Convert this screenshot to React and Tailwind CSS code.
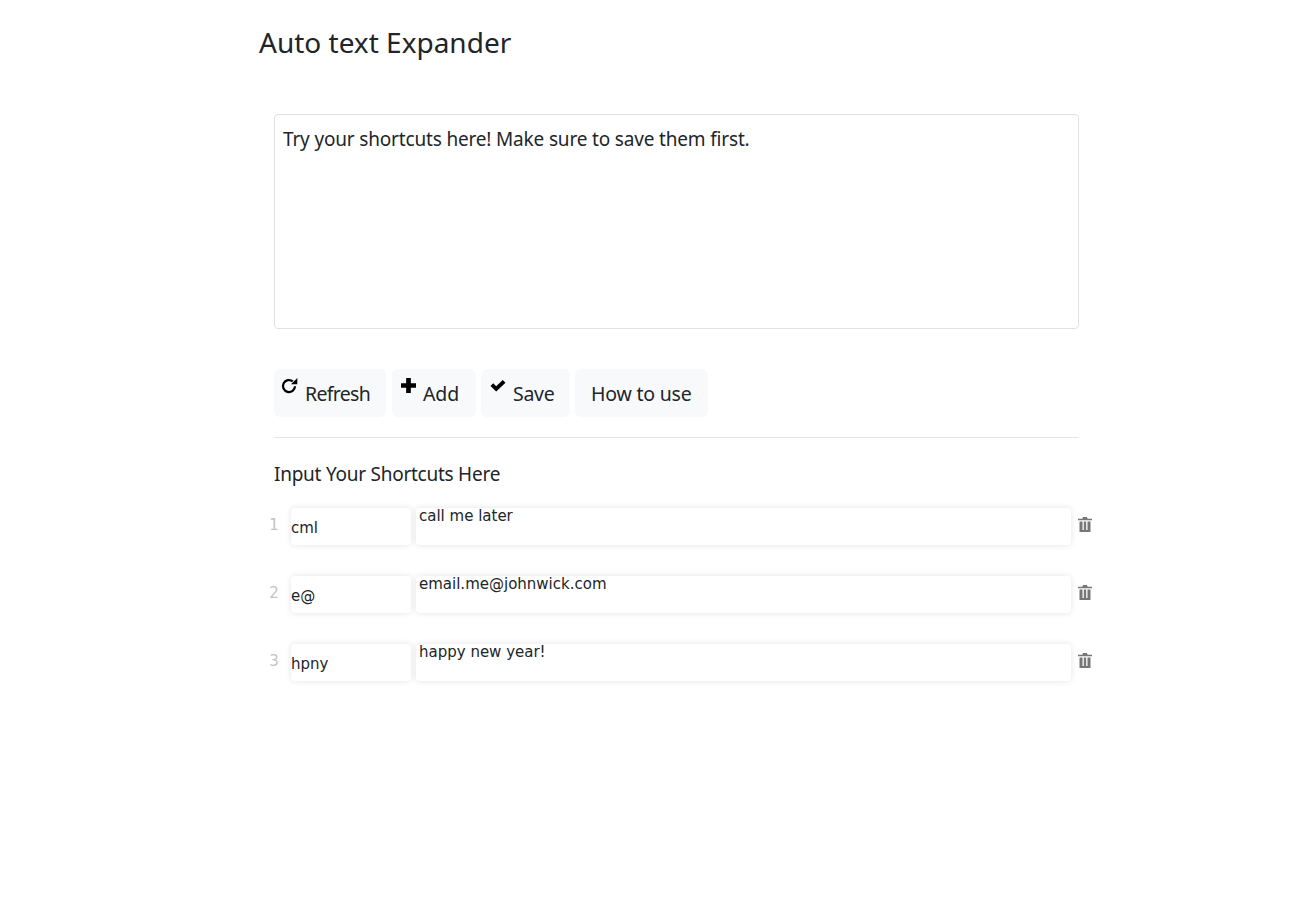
import React from "react";

const Refresh = () => (
  <svg width="17" height="17" viewBox="0 0 17 17" className="absolute left-[7px] top-[8px]">
    <path d="M14 9.2A6 6 0 1 1 11.800 4.400" fill="none" stroke="#000" strokeWidth="2.200" />
    <path d="M10 7.300h6.300V1z" fill="#000" />
  </svg>
);
const Plus = () => (
  <svg width="15" height="15" viewBox="0 0 16 16" className="absolute left-[9px] top-[9px]">
    <path d="M5.500 0h5v5.500H16v5h-5.500V16h-5v-5.500H0v-5h5.500z" fill="#000" />
  </svg>
);
const Check = () => (
  <svg width="16" height="16" viewBox="0 0 16 16" className="absolute left-[9px] top-[9px]">
    <path d="M.5 8l2.700-2.700L6.200 8.200 12.700 2 15.500 4.700 6.200 13.600z" fill="#000" />
  </svg>
);
const Trash = () => (
  <svg width="14" height="15" viewBox="0 0 14 15" className="shrink-0">
    <path d="M5 0h4l.6 1.700H14V3.300H0V1.700H4.400zM1.500 4.500h11V15h-11zM4.500 4.500v8.500h1.300V4.500zM8.200 4.500v8.500h1.300V4.500z" fill="#777" fillRule="evenodd" />
  </svg>
);

const Btn = ({ icon, label, cls }) => (
  <button className={`relative h-12 rounded-md bg-[#f8f9fa] pt-[2px] text-left text-[19.500px] leading-[30px] text-[#212529] ${cls}`}>
    {icon}
    {label}
  </button>
);

const Row = ({ n, a, b }) => (
  <div className="flex h-[37px] items-start">
    <span className="-ml-[5px] mt-[7px] w-[10px] shrink-0 text-center font-['DejaVu_Sans',sans-serif] text-[15px] leading-[20px] text-[#c4c4c4]">{n}</span>
    <div className="ml-[12px] h-[37px] w-[120px] shrink-0 rounded-[4px] bg-white pt-[10px] font-['DejaVu_Sans',sans-serif] text-[15px] leading-[20px] text-[#212529] shadow-[0_0_6px_rgba(0,0,0,0.11)]">{a}</div>
    <div className="ml-[5px] h-[37px] w-[655px] shrink-0 rounded-[4px] bg-white pl-[3px] font-['DejaVu_Sans',sans-serif] text-[15px] leading-[17px] text-[#212529] shadow-[0_0_6px_rgba(0,0,0,0.11)]">{b}</div>
    <div className="ml-[7px] mt-[9px]"><Trash /></div>
  </div>
);

export default function App() {
  return (
    <div className="min-h-[907px] bg-white pl-[259px] font-['Noto_Sans',sans-serif] text-[#212529]">
      <h1 className="pt-[24px] text-[28px] font-normal leading-[36px] text-[#212529]">Auto text Expander</h1>
      <div className="ml-[15px] w-[805px]">
        <div className="mt-[54px] h-[215px] rounded-[4px] border border-[#dee2e6] px-2 py-[10px] text-[19px] leading-[28px] tracking-[-0.17px] text-[#212529]">
          Try your shortcuts here! Make sure to save them first.
        </div>
        <div className="mt-[40px] flex gap-[5px]">
          <Btn icon={<Refresh />} label="Refresh" cls="w-[112px] pl-[31px] tracking-[-0.7px]" />
          <Btn icon={<Plus />} label="Add" cls="ml-px w-[84px] pl-[31px] tracking-[-0.1px]" />
          <Btn icon={<Check />} label="Save" cls="w-[89px] pl-[32px] tracking-[-0.3px]" />
          <Btn label="How to use" cls="w-[133px] pl-[16px] tracking-[-0.2px]" />
        </div>
        <div className="mt-[20px] border-t border-[#e5e5e5]" />
        <h2 className="mt-[22px] text-[19px] font-normal leading-[28px] tracking-[-0.25px]">Input Your Shortcuts Here</h2>
        <div className="mt-[20px] flex flex-col gap-[31px]">
          <Row n="1" a="cml" b="call me later" />
          <Row n="2" a="e@" b="email.me@johnwick.com" />
          <Row n="3" a="hpny" b="happy new year!" />
        </div>
      </div>
    </div>
  );
}
